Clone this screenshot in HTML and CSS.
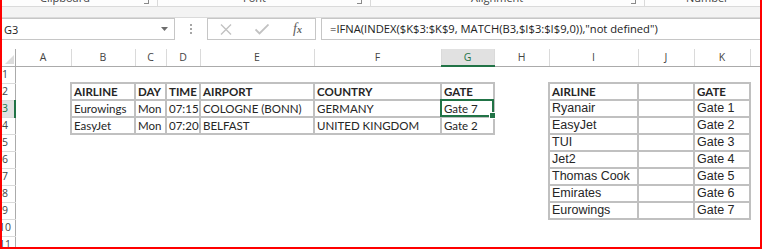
FILE: index.html
```html
<!DOCTYPE html>
<html lang="en">
<head>
    <meta charset="UTF-8">
    <title>Airline gates</title>
    <link rel="stylesheet" href="styles.css">
</head>
<body>
    <div class="frame">
        <div class="ribbon-tail">
            <div class="group g-clip"><span>Clipboard</span><i class="launcher"></i></div>
            <div class="group g-font"><span>Font</span><i class="launcher"></i></div>
            <div class="group g-align"><span>Alignment</span><i class="launcher"></i></div>
            <div class="group g-num"><span>Number</span></div>
        </div>
        <div class="ribbon-gap"></div>

        <div class="formula-bar">
            <div class="name-box">
                <span>G3</span>
                <svg class="drop" width="7" height="4" viewBox="0 0 7 4"><path d="M0 0h7L3.5 4z" fill="#6d6d6d"/></svg>
            </div>
            <div class="grip"><i></i><i></i><i></i></div>
            <div class="fx-buttons">
                <svg width="12" height="11" viewBox="0 0 12 11"><path d="M1 0.5l10 10M11 0.5l-10 10" stroke="#c2c2c2" stroke-width="1.4" fill="none"/></svg>
                <svg width="14" height="11" viewBox="0 0 14 11"><path d="M0.5 5.5l4 4 9-9" stroke="#c2c2c2" stroke-width="1.8" fill="none"/></svg>
                <span class="fx">f<span>x</span></span>
            </div>
            <div class="formula">=IFNA(INDEX($K$3:$K$9, MATCH(B3,$I$3:$I$9,0)),"not defined")</div>
        </div>

        <table class="sheet">
            <colgroup>
                <col class="c-rh"><col class="c-a"><col class="c-b"><col class="c-c"><col class="c-d"><col class="c-e">
                <col class="c-f"><col class="c-g"><col class="c-h"><col class="c-i"><col class="c-j"><col class="c-k"><col class="c-l">
            </colgroup>
            <thead>
                <tr>
                    <th class="corner"><i></i></th>
                    <th>A</th><th>B</th><th>C</th><th>D</th><th>E</th><th>F</th>
                    <th class="active">G</th><th>H</th><th>I</th><th>J</th><th>K</th><th></th>
                </tr>
            </thead>
            <tbody>
                <tr><td class="rh"><span>1</span></td><td></td><td></td><td></td><td></td><td></td><td></td><td></td><td></td><td></td><td></td><td></td><td></td></tr>
                <tr>
                    <td class="rh"><span>2</span></td><td></td>
                    <td class="t hd">AIRLINE</td><td class="t hd">DAY</td><td class="t hd">TIME</td><td class="t hd">AIRPORT</td><td class="t hd">COUNTRY</td><td class="t hd">GATE</td>
                    <td></td>
                    <td class="t hd">AIRLINE</td><td class="t"></td><td class="t hd">GATE</td><td></td>
                </tr>
                <tr>
                    <td class="rh active"><span>3</span></td><td></td>
                    <td class="t">Eurowings</td><td class="t">Mon</td><td class="t">07:15</td><td class="t">COLOGNE (BONN)</td><td class="t">GERMANY</td><td class="t selected">Gate 7</td>
                    <td></td>
                    <td class="t ar">Ryanair</td><td class="t"></td><td class="t ar">Gate 1</td><td></td>
                </tr>
                <tr>
                    <td class="rh"><span>4</span></td><td></td>
                    <td class="t">EasyJet</td><td class="t">Mon</td><td class="t">07:20</td><td class="t">BELFAST</td><td class="t">UNITED KINGDOM</td><td class="t">Gate 2</td>
                    <td></td>
                    <td class="t ar">EasyJet</td><td class="t"></td><td class="t ar">Gate 2</td><td></td>
                </tr>
                <tr>
                    <td class="rh"><span>5</span></td><td></td><td></td><td></td><td></td><td></td><td></td><td></td><td></td>
                    <td class="t ar">TUI</td><td class="t"></td><td class="t ar">Gate 3</td><td></td>
                </tr>
                <tr>
                    <td class="rh"><span>6</span></td><td></td><td></td><td></td><td></td><td></td><td></td><td></td><td></td>
                    <td class="t ar">Jet2</td><td class="t"></td><td class="t ar">Gate 4</td><td></td>
                </tr>
                <tr>
                    <td class="rh"><span>7</span></td><td></td><td></td><td></td><td></td><td></td><td></td><td></td><td></td>
                    <td class="t ar">Thomas Cook</td><td class="t"></td><td class="t ar">Gate 5</td><td></td>
                </tr>
                <tr>
                    <td class="rh"><span>8</span></td><td></td><td></td><td></td><td></td><td></td><td></td><td></td><td></td>
                    <td class="t ar">Emirates</td><td class="t"></td><td class="t ar">Gate 6</td><td></td>
                </tr>
                <tr>
                    <td class="rh"><span>9</span></td><td></td><td></td><td></td><td></td><td></td><td></td><td></td><td></td>
                    <td class="t ar">Eurowings</td><td class="t"></td><td class="t ar">Gate 7</td><td></td>
                </tr>
                <tr><td class="rh"><span>10</span></td><td></td><td></td><td></td><td></td><td></td><td></td><td></td><td></td><td></td><td></td><td></td><td></td></tr>
                <tr><td class="rh"><span>11</span></td><td></td><td></td><td></td><td></td><td></td><td></td><td></td><td></td><td></td><td></td><td></td><td></td></tr>
            </tbody>
        </table>
    </div>
</body>
</html>
```

FILE: styles.css
```css
:root {
    --line-light: #dadada;
    --line: #c6c6c6;
    --header-text: #444;
    --cell-text: #262626;
    --table-border: #c0c0c0;
    --excel-green: #217346;
    --active-header: #e1e1e1;
}

body {
    margin: 0;
    background: #fff;
    font-family: 'Open Sans', sans-serif;
}

.frame {
    width: 762px;
    height: 249px;
    box-sizing: border-box;
    border: 2px solid #ff0000;
    border-top: none;
    overflow: hidden;
    background: #fff;
}

/* bottom edge of the ribbon */
.ribbon-tail {
    display: flex;
    height: 6px;
    overflow: hidden;
    border-bottom: 1px solid var(--line-light);
    background: #fdfdfd;
}

.group {
    position: relative;
    height: 6px;
    border-right: 1px solid var(--line-light);
    font-size: 11px;
    color: var(--header-text);
    box-sizing: border-box;
}

.group span {
    display: block;
    line-height: 12px;
    margin-top: -8px;
    white-space: nowrap;
}

.g-clip { width: 156px; }
.g-clip span { margin-left: 38px; }
.g-font { width: 213px; }
.g-font span { margin-left: 85px; }
.g-align { width: 274px; }
.g-align span { margin-left: 100px; }
.g-num { flex: 1; border-right: none; }
.g-num span { margin-left: 41px; }

.launcher {
    position: absolute;
    right: 8px;
    top: 0;
    width: 4px;
    height: 3px;
    border-right: 1px solid #8a8a8a;
    border-bottom: 1px solid #8a8a8a;
}

.ribbon-gap {
    height: 10px;
    background: #f3f3f3;
}

/* name box + formula line */
.formula-bar {
    display: flex;
    height: 22px;
    border-top: 1px solid var(--line-light);
}

.name-box {
    width: 173px;
    box-sizing: border-box;
    border: 1px solid var(--line);
    border-left: none;
    display: flex;
    align-items: center;
    justify-content: space-between;
    padding: 0 6px 0 2px;
    font-size: 11px;
    color: #222;
}

.grip {
    width: 32px;
    display: flex;
    flex-direction: column;
    align-items: center;
    justify-content: center;
    gap: 2px;
}

.grip i {
    width: 2px;
    height: 2px;
    background: #a6a6a6;
}

.fx-buttons {
    width: 109px;
    box-sizing: border-box;
    border: 1px solid var(--line);
    display: flex;
    align-items: center;
    padding: 0 0 0 12px;
    gap: 23px;
}

.fx {
    font-family: 'Liberation Serif', serif;
    font-style: italic;
    font-size: 14px;
    color: #606060;
    margin-left: 1px;
}

.fx span {
    font-size: 10px;
    font-weight: bold;
}

.formula {
    flex: 1;
    margin-left: 5px;
    border: 1px solid var(--line);
    border-right: none;
    padding: 0 0 0 8px;
    font-size: 11.2px;
    line-height: 20px;
    color: #222;
    white-space: nowrap;
}

/* grid */
.sheet {
    margin-top: 9px;
    table-layout: fixed;
    border-collapse: collapse;
    width: 808px;
}

.c-rh { width: 13px; }
.c-a { width: 56px; }
.c-b { width: 64px; }
.c-c { width: 31px; }
.c-d { width: 34px; }
.c-e { width: 114px; }
.c-f { width: 127px; }
.c-g { width: 53px; }
.c-h { width: 55px; }
.c-i { width: 89px; }
.c-j { width: 56px; }
.c-k { width: 56px; }
.c-l { width: 60px; }

.sheet th {
    height: 16px;
    padding: 0;
    font-weight: normal;
    font-size: 10.5px;
    line-height: 14px;
    color: var(--header-text);
    border-right: 1px solid var(--line-light);
    border-bottom: 1px solid #ababab;
}

.sheet th.active {
    background: var(--active-header);
    color: var(--excel-green);
    border-bottom: 2px solid var(--excel-green);
}

.sheet th.corner {
    position: relative;
    border-right: 1px solid #ababab;
}

.corner i {
    position: absolute;
    right: 1px;
    bottom: 2px;
    width: 0;
    height: 0;
    border-left: 9px solid transparent;
    border-bottom: 9px solid #dcdcdc;
}

.sheet tbody tr {
    height: 17px;
}

.sheet td {
    padding: 0 0 0 2px;
    vertical-align: bottom;
    white-space: nowrap;
    overflow: hidden;
    font-family: 'Lato', sans-serif;
    font-size: 11.5px;
    line-height: 15px;
    color: var(--cell-text);
}

.sheet td.rh {
    padding: 0;
    overflow: hidden;
    border-right: 1px solid #ababab;
    border-bottom: 1px solid var(--line-light);
    font-family: 'Open Sans', sans-serif;
    font-size: 10.5px;
    line-height: 15px;
    color: var(--header-text);
    vertical-align: middle;
}

.rh span {
    display: block;
    width: 22px;
    margin-left: -8px;
    text-align: center;
}

.sheet td.rh.active {
    background: var(--active-header);
    color: var(--excel-green);
    border-right: 2px solid var(--excel-green);
}

.sheet td.t {
    border: 2px solid var(--table-border);
}

.sheet td.hd {
    font-weight: bold;
}

.sheet td.ar {
    font-family: 'Liberation Sans', Arial, sans-serif;
    font-size: 12.5px;
}

.sheet td.selected {
    position: relative;
    overflow: visible;
}

.selected::after {
    content: "";
    position: absolute;
    left: -2px;
    top: -2px;
    right: -1px;
    bottom: -1px;
    border: 2px solid var(--excel-green);
}

.selected::before {
    content: "";
    position: absolute;
    right: -3px;
    bottom: -3px;
    width: 5px;
    height: 5px;
    background: var(--excel-green);
    border: 1px solid #fff;
    z-index: 1;
}
```
